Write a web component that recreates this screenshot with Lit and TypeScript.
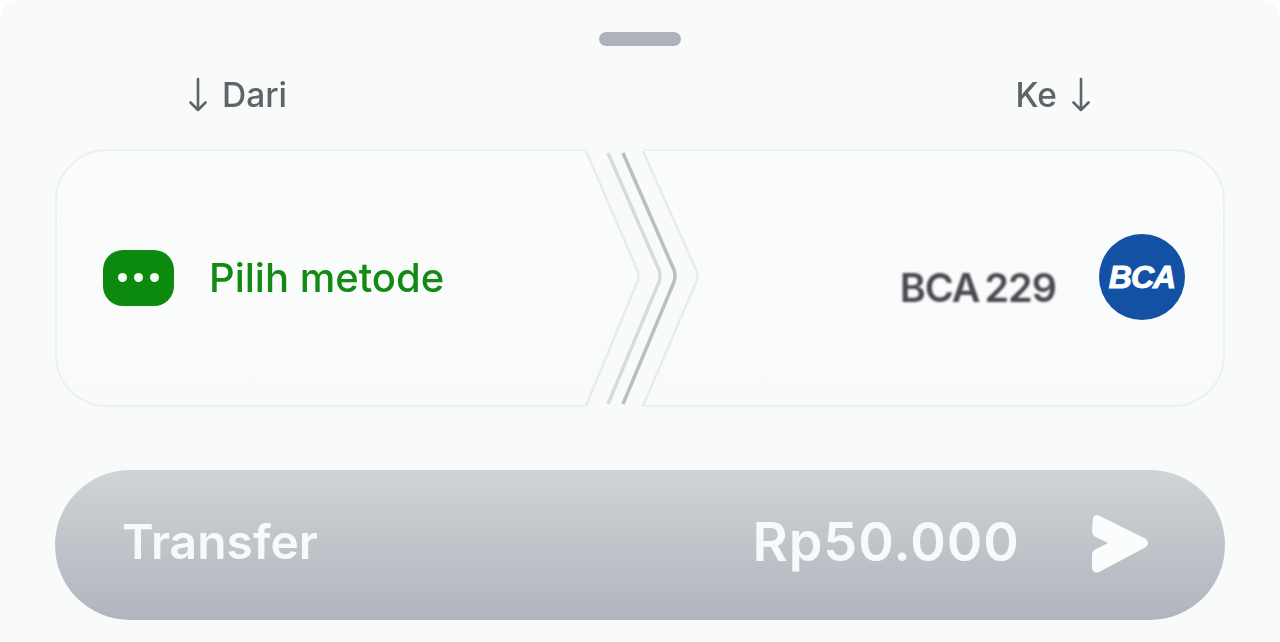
import { LitElement, html, css } from "lit";
import { customElement } from "lit/decorators.js";

const arrow = html`<svg class="arrow" width="20" height="36" viewBox="0 0 20 36" fill="none" stroke="#5f6469" stroke-width="2.6" stroke-linecap="round" stroke-linejoin="round"><path d="M10 2V33M2.5 25.5 10 33l7.5-7.5"/></svg>`;

@customElement("app-root")
export class AppRoot extends LitElement {
  static styles = css`
    :host { display: block; width: 1280px; height: 642px; overflow: hidden; background: #ffffff; font-family: Inter, "Noto Sans", sans-serif; }
    .sheet { box-sizing: border-box; height: 642px; padding: 32px 55px 0; background: #f9fbfb; border-radius: 20px 20px 0 0; display: flex; flex-direction: column; align-items: stretch; }
    .handle { align-self: center; width: 82px; height: 14px; border-radius: 7px; background: #aeb3b9; filter: blur(0.4px); }
    .labels { display: flex; justify-content: space-between; align-items: center; height: 36px; margin-top: 31px; padding: 0 134px 0 133px; color: #5f6469; font-size: 33.5px; font-weight: 500; filter: blur(0.5px); }
    .label { display: flex; align-items: center; gap: 14px; }
    .card { position: relative; box-sizing: border-box; height: 258px; margin-top: 36px; border: 2.5px solid #edf0f1; border-radius: 52px; display: flex; align-items: center; justify-content: space-between; padding: 0 38px 0 46px; background: linear-gradient(180deg, #fbfcfc 0%, #f9fbfb 100%); }
    .chev { position: absolute; left: 519px; top: -3px; width: 150px; height: 260px; filter: blur(0.7px); }
    .method { display: flex; align-items: center; gap: 35px; color: #138a14; font-size: 40px; font-weight: 500; filter: blur(0.5px); margin-bottom: 1px; }
    .dots { width: 71px; height: 56px; border-radius: 20px; background: #0b8a0f; display: flex; align-items: center; justify-content: center; gap: 7px; }
    .dots span { width: 9px; height: 9px; border-radius: 50%; background: #f6fbf6; }
    .bank { display: flex; align-items: center; gap: 43px; }
    .account { color: #47494f; font-size: 39.5px; font-weight: 600; letter-spacing: -1px; word-spacing: -4px; filter: blur(0.9px); margin-top: 19px; }
    .logo { width: 86px; height: 86px; border-radius: 50%; background: #1351a4; color: #fff; display: flex; align-items: center; justify-content: center; font-family: "Liberation Sans", sans-serif; font-style: italic; font-weight: 700; font-size: 32px; letter-spacing: -1px; -webkit-text-stroke: 1px #fff; margin-bottom: 2px; }
    .button { box-sizing: border-box; height: 150px; margin-top: 63px; border-radius: 75px; background: linear-gradient(180deg, #cfd4d7 0%, #b1b5bd 100%); color: #f8f9fa; display: flex; align-items: center; padding: 0 75px 8px 67px; font-size: 48px; font-weight: 600; }
    .button span { filter: blur(0.5px); }
    .amount { margin-left: auto; margin-right: 70px; font-size: 54px; letter-spacing: 1px; }
    .send { margin-top: 6px; }
  `;

  render() {
    return html`<div class="sheet">
      <div class="handle"></div>
      <div class="labels">
        <div class="label">${arrow}<span>Dari</span></div>
        <div class="label"><span>Ke</span>${arrow}</div>
      </div>
      <div class="card">
        <div class="method"><div class="dots"><span></span><span></span><span></span></div><span>Pilih metode</span></div>
        <div class="bank"><span class="account">BCA 229</span><div class="logo">BCA</div></div>
        <svg class="chev" viewBox="0 0 150 260" fill="none">
          <path d="M10 0H67L122 128 67 260H10L63 128Z" fill="#f9fbfb"/>
          <path d="M10 3 62 124Q63 128 62 132L10 258" stroke="#e9ecee" stroke-width="2.5"/>
          <path d="M67 3 121 124Q122 128 121 132L67 258" stroke="#e9ecee" stroke-width="2.5"/>
          <path d="M32 5 83 122Q85 128 83 134L32 256" stroke="#d7dbde" stroke-width="3.5"/>
          <path d="M47 5 98 122Q100 128 98 134L47 256" stroke="#b8bfc5" stroke-width="3.5"/>
        </svg>
      </div>
      <div class="button">
        <span>Transfer</span>
        <span class="amount">Rp50.000</span>
        <svg class="send" width="60" height="60" viewBox="0 0 60 60" fill="#fbfcfc"><path d="M3 4.5Q4 0 9 1.5L56 25Q60 29 56 33L9 58Q3 60 2 54V41Q2 37 6 35L18 29 6 23Q2 21 2 17Z"/></svg>
      </div>
    </div>`;
  }
}
